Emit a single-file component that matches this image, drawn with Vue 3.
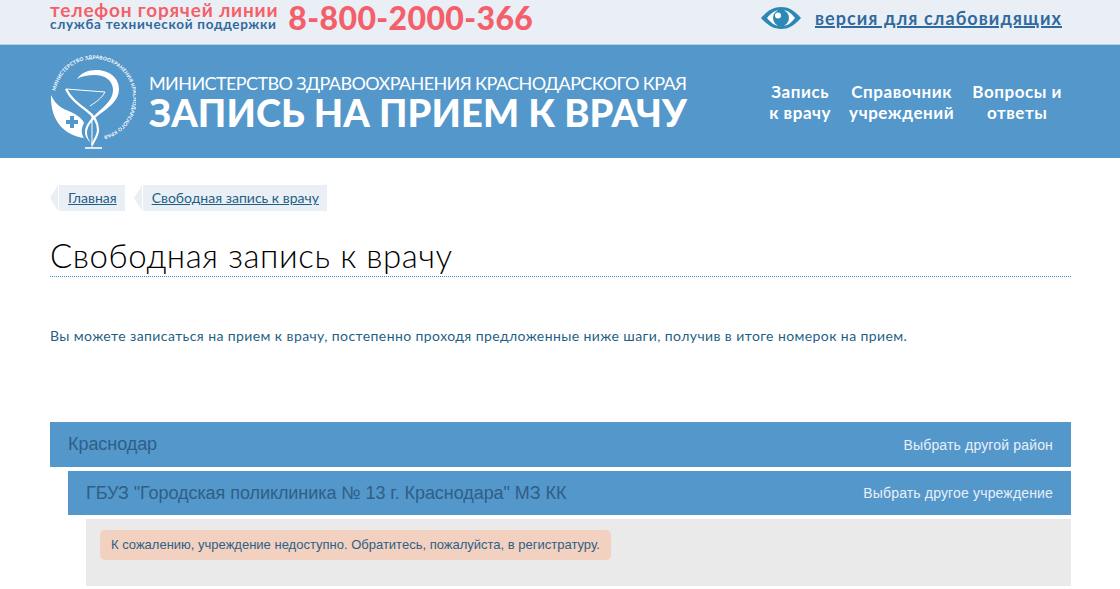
<template>
  <div class="page">
    <div class="topbar">
      <div class="hotline">
        <div class="hotline-text">
          <div class="hotline-title">телефон горячей линии</div>
          <div class="hotline-sub">служба технической поддержки</div>
        </div>
        <div class="phone">8-800-2000-366</div>
      </div>
      <div class="eye-version">
        <svg class="eye" viewBox="0 0 40 22" aria-hidden="true">
          <path d="M0 11 C7 3 13 0 20 0 C27 0 33 3 40 11 C33 19 27 22 20 22 C13 22 7 19 0 11 Z" fill="#2c88b4" />
          <path d="M6 11 C10 6 14 3.500 17 3.500 C13 6 12 16 17 18.500 C14 18.500 10 16 6 11 Z" fill="#fff" />
          <path d="M23 3.500 C27 3.500 30 6 34 11 C30 16 27 18.500 23 18.500 C28 16 28 6 23 3.500 Z" fill="#fff" />
          <circle cx="20" cy="11" r="8" fill="#2c88b4" />
          <circle cx="17" cy="8.500" r="3" fill="#fff" />
        </svg>
        <a class="eye-link" href="#">версия для слабовидящих</a>
      </div>
    </div>

    <header class="header">
      <div class="brand">
        <svg class="logo" viewBox="0 0 90 100" aria-hidden="true">
          <defs>
            <path id="ring" d="M9.700 39 A39 39 0 1 1 58 83.600" />
          </defs>
          <text class="logo-text"><textPath href="#ring" textLength="167">МИНИСТЕРСТВО ЗДРАВООХРАНЕНИЯ КРАСНОДАРСКОГО КРАЯ</textPath></text>
          <path d="M5 43 C10 55 20 58 27 61 C33 64 37 68 38 71 C35 76 35 82 38 86 C22 84 4 72 5 43 Z" fill="#fff" />
          <path d="M24 64 h4 v4 h4 v4 h-4 v4 h-4 v-4 h-4 v-4 h4 Z" fill="#5497cb" />
          <path d="M31 27 C35 21 42 18 50 18 C62 18 73 25 73 37 C73 49 62 56 54 62 C46 68 41 74 41 81 C41 85 43 88 45 91 C42 88 39 85 39 80 C39 72 46 66 52 60 C60 53 67 47 67 38 C67 28 58 23 49 23 C42 23 36 24 31 27 Z" fill="#fff" />
          <path d="M20 37 L59 40" stroke="#fff" stroke-width="1" />
          <path d="M20 37 C24 46 32 52 40 58 C47 63 52 70 52 78 C52 84 48 88 46 93" fill="none" stroke="#fff" stroke-width="2.200" />
          <path d="M59 40 C56 46 50 50 44 54" fill="none" stroke="#fff" stroke-width="1" />
          <path d="M46 62 V95" stroke="#fff" stroke-width="1" />
          <path d="M39 96 H56" stroke="#fff" stroke-width="1.600" />
        </svg>
        <div class="brand-text">
          <div class="ministry">МИНИСТЕРСТВО ЗДРАВООХРАНЕНИЯ КРАСНОДАРСКОГО КРАЯ</div>
          <div class="service">ЗАПИСЬ НА ПРИЕМ К ВРАЧУ</div>
        </div>
      </div>
      <nav class="nav">
        <a v-for="item in navItems" :key="item[0]" href="#">{{ item[0] }}<br />{{ item[1] }}</a>
      </nav>
    </header>

    <main class="content">
      <div class="crumbs">
        <a v-for="c in crumbs" :key="c" class="crumb" href="#">{{ c }}</a>
      </div>
      <h1 class="title">Свободная запись к врачу</h1>
      <p class="intro">Вы можете записаться на прием к врачу, постепенно проходя предложенные ниже шаги, получив в итоге номерок на прием.</p>

      <div class="step">
        <span class="step-name">Краснодар</span>
        <a class="step-link" href="#">Выбрать другой район</a>
      </div>
      <div class="step step-second">
        <span class="step-name">ГБУЗ "Городская поликлиника № 13 г. Краснодара" МЗ КК</span>
        <a class="step-link" href="#">Выбрать другое учреждение</a>
      </div>
      <div class="panel">
        <div class="alert">К сожалению, учреждение недоступно. Обратитесь, пожалуйста, в регистратуру.</div>
      </div>
    </main>
  </div>
</template>

<script setup>
const navItems = [
  ["Запись", "к врачу"],
  ["Справочник", "учреждений"],
  ["Вопросы и", "ответы"],
];

const crumbs = ["Главная", "Свободная запись к врачу"];
</script>

<style>
html, body { margin: 0; background: #fff; }
</style>

<style scoped>
.page { font-family: "Lato", "Open Sans", sans-serif; height: 589px; overflow: hidden; }

.topbar { height: 44px; background: #e9eff4; display: flex; justify-content: space-between; padding: 0 58px 0 50px; border-bottom: 1px solid #b5d0e4; }
.hotline { display: flex; gap: 10px; }
.hotline-text { font-weight: 700; padding-top: 2px; }
.hotline-title { font-size: 19px; line-height: 15px; color: #f45f6b; letter-spacing: 0.8px; }
.hotline-sub { font-size: 13.500px; line-height: 14px; color: #30699f; letter-spacing: 0.7px; }
.phone { font-size: 32px; font-weight: 900; line-height: 36px; color: #f45f6b; letter-spacing: 0.35px; }
.eye-version { display: flex; gap: 14px; align-items: center; height: 35px; }
.eye { width: 40px; height: 22px; }
.eye-link { font-size: 18px; font-weight: 700; color: #30699f; letter-spacing: 1.06px; text-decoration-thickness: 2px; }

.header { height: 113px; background: #5497cb; display: flex; justify-content: space-between; padding: 0 58px 0 46px; color: #fff; }
.brand { display: flex; }
.logo { width: 90px; height: 100px; margin: 7px 13px 0 0; flex: none; }
.logo-text { font-size: 5px; font-weight: 700; fill: #fff; }
.brand-text { padding-top: 27px; }
.ministry { font-size: 18px; line-height: 22px; letter-spacing: -0.6px; white-space: nowrap; }
.service { font-size: 38px; font-weight: 900; line-height: 36px; letter-spacing: 0.08px; white-space: nowrap; }
.nav { display: flex; gap: 18px; padding-top: 36px; }
.nav a { color: #fff; text-decoration: none; text-align: center; font-size: 17px; font-weight: 700; line-height: 21px; letter-spacing: 0.55px; }

.content { padding: 27px 49px 0 50px; }
.crumbs { display: flex; gap: 9px; }
.crumb { position: relative; margin-left: 9px; height: 26px; line-height: 26px; padding: 0 8px 0 9px; background: #e9eff4; color: #1f5f85; font-size: 14px; }
.crumb::before { content: ""; position: absolute; left: -9px; top: 0; border-style: solid; border-width: 13px 8px 13px 0; border-color: transparent #e9eff4 transparent transparent; }
.title { margin: 24px 0 0; height: 41px; font-size: 33px; line-height: 40px; font-weight: 300; color: #000; border-bottom: 1px dotted #3f8bbd; letter-spacing: 0.6px; }
.intro { margin: 50px 0 0; height: 18px; font-size: 14px; line-height: 17px; color: #1f5f85; letter-spacing: 0.41px; white-space: nowrap; }

.step { margin-top: 77px; height: 45px; background: #5497cb; display: flex; justify-content: space-between; align-items: center; padding: 0 18px; font-family: "Liberation Sans", Arial, sans-serif; }
.step-second { margin: 4px 0 0 18px; height: 44px; }
.step-name { font-size: 18px; color: #2f5f86; letter-spacing: -0.06px; }
.step-link { font-size: 14px; color: #e8f0f7; text-decoration: none; letter-spacing: 0.16px; }
.panel { margin: 4px 0 0 36px; height: 53px; padding: 11px 14px 3px; background: #eaeaea; font-family: "Liberation Sans", Arial, sans-serif; }
.alert { width: max-content; height: 30px; line-height: 30px; padding: 0 11px; border-radius: 5px; background: #f2d1c0; color: #2f5f86; font-size: 13px; }
</style>
